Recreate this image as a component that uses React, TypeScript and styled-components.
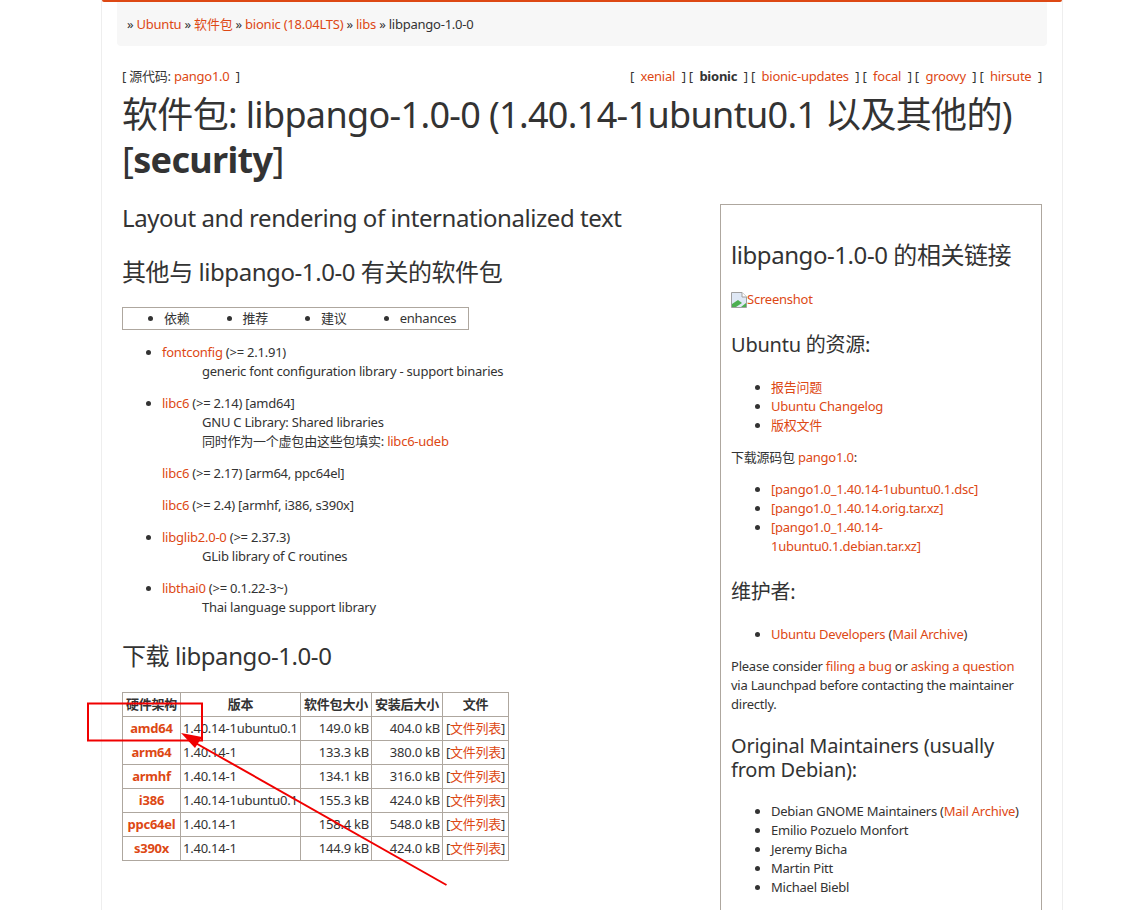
import React from "react";
import styled, { createGlobalStyle } from "styled-components";

const GlobalStyle = createGlobalStyle`
  html, body {
    margin: 0;
    height: 910px;
    overflow: hidden;
    background: #fff;
  }
  body {
    font-family: "Noto Sans", "Noto Sans CJK SC", sans-serif;
    font-size: 13px;
    line-height: 19px;
    letter-spacing: -0.018em;
    color: #333;
  }
  a {
    color: #dd4814;
    text-decoration: none;
  }
`;

const Page = styled.div`
  position: relative;
  width: 1133px;
  height: 910px;
  overflow: hidden;
`;

const Wrapper = styled.div`
  box-sizing: border-box;
  width: 962px;
  height: 910px;
  margin-left: 101px;
  padding: 0 15px;
  border-left: 1px solid #eee;
  border-right: 1px solid #eee;
  position: relative;
  &::before {
    content: "";
    position: absolute;
    top: 0;
    left: 0;
    right: 0;
    height: 2px;
    background: #dd4814;
    border-radius: 0 0 2px 2px;
  }
`;

const Breadcrumbs = styled.div`
  height: 46px;
  box-sizing: border-box;
  padding: 15px 10px 0;
  background: #f7f7f7;
  border-radius: 0 0 4px 4px;
`;

const Content = styled.div`
  padding: 21px 5px 0;
`;

const SourceRow = styled.div`
  display: flex;
  justify-content: space-between;
  height: 19px;
`;

const DistroLinks = styled.div`
  a, strong {
    margin: 0 6.5px;
  }
`;

const Title = styled.h1`
  margin: 6px 0 0;
  font-size: 36px;
  line-height: 45px;
  font-weight: 400;
  letter-spacing: -0.0185em;
  color: #333;
`;

const Columns = styled.div`
  display: flex;
  justify-content: space-between;
  margin-top: 21px;
`;

const LeftColumn = styled.div`
  width: 590px;
`;

const H2 = styled.h2`
  margin: 0;
  font-size: 24px;
  line-height: 30px;
  font-weight: 400;
  letter-spacing: -0.018em;
`;

const RelationsHeading = styled(H2)`
  margin-top: 24px;
`;

const DownloadHeading = styled(H2)`
  margin-top: 24px;
`;

const Tabs = styled.ul`
  box-sizing: border-box;
  display: flex;
  width: 347px;
  height: 23px;
  margin: 20px 0 0;
  padding: 1px 0 0 41px;
  border: 1px solid #aea79f;
  li {
    margin-right: 53px;
  }
  li:last-child {
    margin: 0;
  }
`;

const RelationList = styled.ul`
  margin: 13px 0 0;
  padding: 0 0 0 40px;
  li {
    margin-bottom: 13px;
  }
`;

const Description = styled.div`
  margin-left: 40px;
`;

const Variant = styled.div`
  margin-top: 13px;
`;

const DownloadTable = styled.table`
  margin-top: 21px;
  border-collapse: collapse;
  table-layout: fixed;
  width: 386px;
  th, td {
    height: 24px;
    padding: 0 2px;
    border: 1px solid #aea79f;
    white-space: nowrap;
    box-sizing: border-box;
  }
  th {
    text-align: center;
    font-weight: 700;
  }
`;

const Col = styled.col<{ $width: number }>`
  width: ${(p) => p.$width}px;
`;

const ArchCell = styled.td`
  text-align: center;
  font-weight: 700;
`;

const SizeCell = styled.td`
  text-align: right;
`;

const FilesCell = styled.td`
  text-align: center;
`;

const SideBox = styled.aside`
  box-sizing: border-box;
  width: 322px;
  height: 760px;
  margin-top: 1px;
  padding: 20px 10px 0;
  border: 1px solid #aea79f;
`;

const SideTitle = styled.h2`
  margin: 15px 0 0;
  font-size: 24px;
  line-height: 30px;
  font-weight: 400;
  letter-spacing: -0.018em;
`;

const ScreenshotLink = styled.a`
  display: flex;
  align-items: center;
  margin-top: 20px;
  height: 19px;
`;

const SideHeading = styled.h3`
  margin: 20px 0 0;
  font-size: 20px;
  line-height: 24px;
  font-weight: 400;
  ${ScreenshotLink} + & {
    margin-top: 24px;
  }
`;

const SideList = styled.ul`
  margin: 21px 0 0;
  padding: 0 0 0 40px;
  & + ${SideHeading} {
    margin-top: 24px;
  }
`;

const MaintainerList = styled(SideList)`
  margin-top: 20px;
`;

const SideText = styled.p`
  margin: 13px 0 0;
  & + ${SideList} {
    margin-top: 13px;
  }
`;

const Annotation = styled.svg`
  position: absolute;
  top: 0;
  left: 0;
  pointer-events: none;
`;

const rows = [
  ["amd64", "1.40.14-1ubuntu0.1", "149.0 kB", "404.0 kB"],
  ["arm64", "1.40.14-1", "133.3 kB", "380.0 kB"],
  ["armhf", "1.40.14-1", "134.1 kB", "316.0 kB"],
  ["i386", "1.40.14-1ubuntu0.1", "155.3 kB", "424.0 kB"],
  ["ppc64el", "1.40.14-1", "158.4 kB", "548.0 kB"],
  ["s390x", "1.40.14-1", "144.9 kB", "424.0 kB"],
];

const distros = ["xenial", "bionic", "bionic-updates", "focal", "groovy", "hirsute"];

const BrokenImage = () => (
  <svg width="16" height="16" viewBox="0 0 16 16">
    <path d="M0.5 0.5H11L15.5 5V15.5H0.5Z" fill="#dfe8f5" stroke="#a0a0a0" />
    <path d="M11 0.5V5H15.5" fill="#fff" stroke="#a0a0a0" />
    <path d="M1 15V12L7 8L11 11L5 15Z" fill="#4caf50" />
    <path d="M10 15L15 11V15Z" fill="#4caf50" />
  </svg>
);

export default function App() {
  return (
    <Page>
      <GlobalStyle />
      <Wrapper>
        <Breadcrumbs>
          » <a href="#">Ubuntu</a> » <a href="#">软件包</a> » <a href="#">bionic (18.04LTS)</a> » <a href="#">libs</a> » libpango-1.0-0
        </Breadcrumbs>
        <Content>
          <SourceRow>
            <div>[ 源代码: <a href="#">pango1.0</a> &nbsp;]</div>
            <DistroLinks>
              {distros.map((d, i) => (
                <React.Fragment key={d}>
                  {i > 0 && " "}
                  [{d === "bionic" ? <strong>bionic</strong> : <a href="#">{d}</a>}]
                </React.Fragment>
              ))}
            </DistroLinks>
          </SourceRow>
          <Title>
            软件包: libpango-1.0-0 (1.40.14-1ubuntu0.1 以及其他的)
            <br />[<strong>security</strong>]
          </Title>
          <Columns>
            <LeftColumn>
              <H2>Layout and rendering of internationalized text</H2>
              <RelationsHeading>其他与 libpango-1.0-0 有关的软件包</RelationsHeading>
              <Tabs>
                <li>依赖</li>
                <li>推荐</li>
                <li>建议</li>
                <li>enhances</li>
              </Tabs>
              <RelationList>
                <li>
                  <a href="#">fontconfig</a> (&gt;= 2.1.91)
                  <Description>generic font configuration library - support binaries</Description>
                </li>
                <li>
                  <a href="#">libc6</a> (&gt;= 2.14) [amd64]
                  <Description>
                    GNU C Library: Shared libraries
                    <br />
                    同时作为一个虚包由这些包填实: <a href="#">libc6-udeb</a>
                  </Description>
                  <Variant><a href="#">libc6</a> (&gt;= 2.17) [arm64, ppc64el]</Variant>
                  <Variant><a href="#">libc6</a> (&gt;= 2.4) [armhf, i386, s390x]</Variant>
                </li>
                <li>
                  <a href="#">libglib2.0-0</a> (&gt;= 2.37.3)
                  <Description>GLib library of C routines</Description>
                </li>
                <li>
                  <a href="#">libthai0</a> (&gt;= 0.1.22-3~)
                  <Description>Thai language support library</Description>
                </li>
              </RelationList>
              <DownloadHeading>下载 libpango-1.0-0</DownloadHeading>
              <DownloadTable>
                <colgroup>
                  <Col $width={58} />
                  <Col $width={120} />
                  <Col $width={71} />
                  <Col $width={71} />
                  <Col $width={66} />
                </colgroup>
                <thead>
                  <tr>
                    <th>硬件架构</th>
                    <th>版本</th>
                    <th>软件包大小</th>
                    <th>安装后大小</th>
                    <th>文件</th>
                  </tr>
                </thead>
                <tbody>
                  {rows.map((r) => (
                    <tr key={r[0]}>
                      <ArchCell><a href="#">{r[0]}</a></ArchCell>
                      <td>{r[1]}</td>
                      <SizeCell>{r[2]}</SizeCell>
                      <SizeCell>{r[3]}</SizeCell>
                      <FilesCell>[<a href="#">文件列表</a>]</FilesCell>
                    </tr>
                  ))}
                </tbody>
              </DownloadTable>
            </LeftColumn>
            <SideBox>
              <SideTitle>libpango-1.0-0 的相关链接</SideTitle>
              <ScreenshotLink href="#"><BrokenImage />Screenshot</ScreenshotLink>
              <SideHeading>Ubuntu 的资源:</SideHeading>
              <SideList>
                <li><a href="#">报告问题</a></li>
                <li><a href="#">Ubuntu Changelog</a></li>
                <li><a href="#">版权文件</a></li>
              </SideList>
              <SideText>下载源码包 <a href="#">pango1.0</a>:</SideText>
              <SideList>
                <li><a href="#">[pango1.0_1.40.14-1ubuntu0.1.dsc]</a></li>
                <li><a href="#">[pango1.0_1.40.14.orig.tar.xz]</a></li>
                <li><a href="#">[pango1.0_1.40.14-1ubuntu0.1.debian.tar.xz]</a></li>
              </SideList>
              <SideHeading>维护者:</SideHeading>
              <SideList>
                <li><a href="#">Ubuntu Developers</a> (<a href="#">Mail Archive</a>)</li>
              </SideList>
              <SideText>
                Please consider <a href="#">filing a bug</a> or <a href="#">asking a question</a> via Launchpad before contacting the maintainer directly.
              </SideText>
              <SideHeading>Original Maintainers (usually from Debian):</SideHeading>
              <MaintainerList>
                <li>Debian GNOME Maintainers (<a href="#">Mail Archive</a>)</li>
                <li>Emilio Pozuelo Monfort</li>
                <li>Jeremy Bicha</li>
                <li>Martin Pitt</li>
                <li>Michael Biebl</li>
              </MaintainerList>
            </SideBox>
          </Columns>
        </Content>
      </Wrapper>
      <Annotation width="1133" height="910" viewBox="0 0 1133 910">
        <rect x="88" y="703.5" width="114" height="37" fill="none" stroke="#f00000" strokeWidth="2" />
        <line x1="446.5" y1="885" x2="192" y2="741" stroke="#f00000" strokeWidth="2" />
        <path d="M181 733L202 737L195 748Z" fill="#f00000" />
      </Annotation>
    </Page>
  );
}
